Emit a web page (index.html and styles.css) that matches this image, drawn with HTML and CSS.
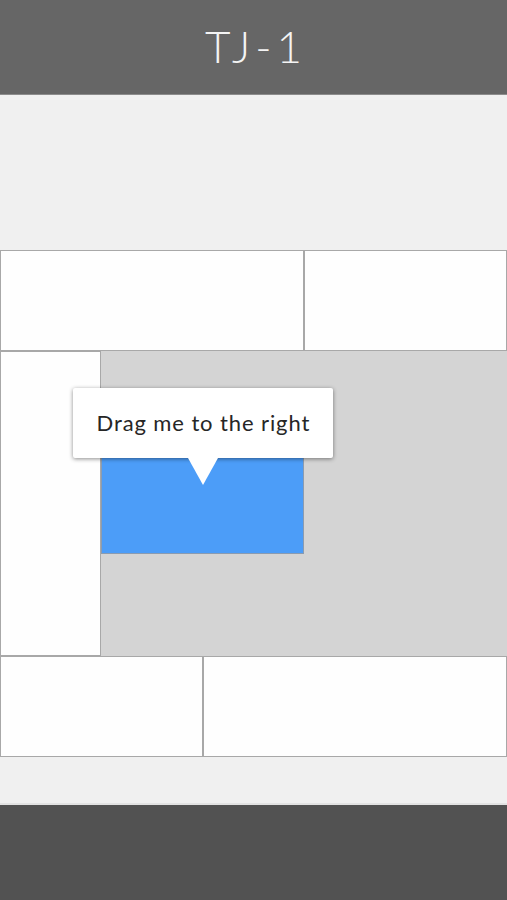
FILE: index.html
```html
<!DOCTYPE html>
<html>
<head>
<meta charset="utf-8">
<link rel="stylesheet" href="styles.css">
</head>
<body>
<header class="top-bar"><h1 class="title">TJ-1</h1></header>
<main class="stage">
  <div class="board">
    <div class="cell c-top-left"></div>
    <div class="cell c-top-right"></div>
    <div class="cell c-left"></div>
    <div class="pit"></div>
    <div class="block">
      <div class="tooltip">Drag me to the right</div>
    </div>
    <div class="cell c-bottom-left"></div>
    <div class="cell c-bottom-right"></div>
  </div>
</main>
<footer class="bottom-bar"></footer>
</body>
</html>
```
FILE: styles.css
```css
html, body {
  margin: 0;
  padding: 0;
  background: #f0f0f0;
  font-family: Lato, "Open Sans", sans-serif;
}
.top-bar {
  height: 94px;
  background: #666666;
  border-bottom: 1px solid #8c8c8c;
  display: flex;
  align-items: center;
  justify-content: center;
}
.title {
  margin: 0;
  color: #f4f4f4;
  font-family: Lato, sans-serif;
  font-weight: 300;
  font-size: 44px;
  letter-spacing: 5px;
  line-height: 1;
  padding-bottom: 2px;
  padding-left: 5px;
}
.stage {
  height: 710px;
  box-sizing: border-box;
  padding-top: 155px;
  border-bottom: 2px solid #e2e2e2;
}
.board {
  display: grid;
  grid-template-columns: repeat(5, 1fr);
  grid-template-rows: repeat(5, 101.4px);
}
.cell {
  background: #fefefe;
  border: 1px solid #a8a8a8;
}
.c-top-left { grid-column: 1 / 4; grid-row: 1; }
.c-top-right { grid-column: 4 / 6; grid-row: 1; }
.c-left { grid-column: 1; grid-row: 2 / 5; }
.pit {
  grid-column: 2 / 6;
  grid-row: 2 / 5;
  background: #d4d4d4;
}
.block {
  grid-column: 2 / 4;
  grid-row: 3;
  background: #4c9df8;
  border: 1px solid #8a9bb0;
  border-top: none;
  position: relative;
}
.c-bottom-left { grid-column: 1 / 3; grid-row: 5; }
.c-bottom-right { grid-column: 3 / 6; grid-row: 5; }
.tooltip {
  position: absolute;
  left: -29px;
  top: -65px;
  width: 260px;
  height: 70px;
  box-sizing: border-box;
  background: #ffffff;
  border-radius: 2px;
  box-shadow: 0 1px 4px rgba(0,0,0,0.45);
  display: flex;
  align-items: center;
  justify-content: center;
  font-size: 22px;
  letter-spacing: 0.9px;
  color: #262626;
  padding-bottom: 1px;
}
.tooltip::after {
  content: "";
  position: absolute;
  left: 115px;
  top: 70px;
  border-left: 15px solid transparent;
  border-right: 15px solid transparent;
  border-top: 27px solid #ffffff;
}
.bottom-bar {
  height: 95px;
  background: #525252;
}
```
